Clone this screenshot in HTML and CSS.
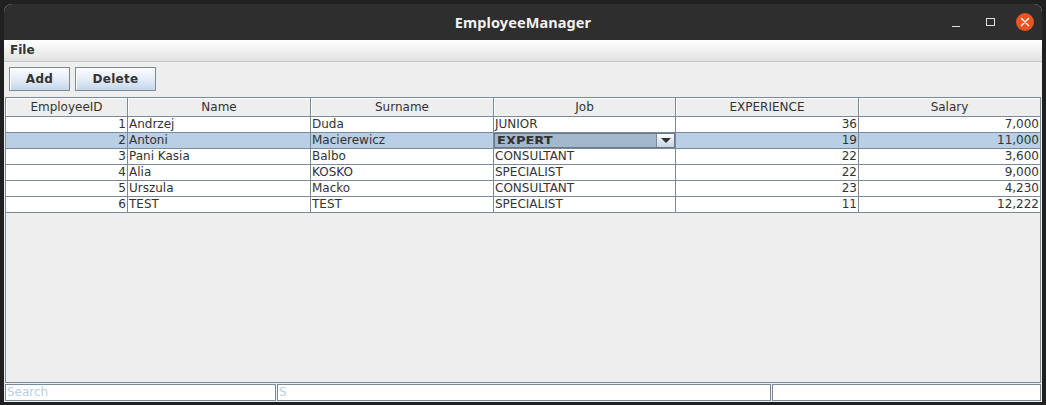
FILE: index.html
```html
<!DOCTYPE html>
<html>
<head>
<meta charset="utf-8">
<link rel="stylesheet" href="styles.css">
</head>
<body>
<div class="window">
  <div class="titlebar">
    <div></div>
    <div class="title">EmployeeManager</div>
    <div class="controls">
      <span class="ctl-min"></span>
      <span class="ctl-max"></span>
      <svg class="ctl-close" width="18" height="18" viewBox="0 0 18 18">
        <circle cx="9" cy="9" r="9" fill="#e95420"/>
        <path d="M5.5 5.5 L12.5 12.5 M12.5 5.5 L5.5 12.5" stroke="#ffffff" stroke-width="1.4" stroke-linecap="round"/>
      </svg>
    </div>
  </div>
  <div class="menubar"><span class="menu">File</span></div>
  <div class="toolbar">
    <button class="btn btn-add">Add</button>
    <button class="btn btn-del">Delete</button>
  </div>
  <div class="pane">
    <div class="row head">
      <div class="hc">EmployeeID</div>
      <div class="hc">Name</div>
      <div class="hc">Surname</div>
      <div class="hc">Job</div>
      <div class="hc">EXPERIENCE</div>
      <div class="hc">Salary</div>
    </div>
    <div class="row">
      <div class="c num">1</div><div class="c">Andrzej</div><div class="c">Duda</div><div class="c">JUNIOR</div><div class="c num">36</div><div class="c num">7,000</div>
    </div>
    <div class="row sel">
      <div class="c num">2</div><div class="c">Antoni</div><div class="c">Macierewicz</div>
      <div class="c editor">
        <div class="combo">
          <div class="combo-text"><span class="combo-clip">EXPERT</span></div>
          <div class="combo-btn"><span class="arrow"></span></div>
        </div>
      </div>
      <div class="c num">19</div><div class="c num">11,000</div>
    </div>
    <div class="row">
      <div class="c num">3</div><div class="c">Pani Kasia</div><div class="c">Balbo</div><div class="c">CONSULTANT</div><div class="c num">22</div><div class="c num">3,600</div>
    </div>
    <div class="row">
      <div class="c num">4</div><div class="c">Alia</div><div class="c">KOSKO</div><div class="c">SPECIALIST</div><div class="c num">22</div><div class="c num">9,000</div>
    </div>
    <div class="row">
      <div class="c num">5</div><div class="c">Urszula</div><div class="c">Macko</div><div class="c">CONSULTANT</div><div class="c num">23</div><div class="c num">4,230</div>
    </div>
    <div class="row">
      <div class="c num">6</div><div class="c">TEST</div><div class="c">TEST</div><div class="c">SPECIALIST</div><div class="c num">11</div><div class="c num">12,222</div>
    </div>
  </div>
  <div class="fields">
    <div class="field f1"><span class="ph">Search</span></div>
    <div class="field f2"><span class="ph">S</span></div>
    <div class="field f3"></div>
  </div>
</div>
</body>
</html>
```
FILE: styles.css
```css
html, body {
  margin: 0;
  padding: 0;
  background: #202020;
}
body {
  width: 1046px;
  height: 405px;
  overflow: hidden;
  font-family: "DejaVu Sans", sans-serif;
  font-size: 12px;
  color: #333333;
}
.window {
  margin: 4px 0 0 4px;
  width: 1038px;
  height: 398px;
  background: #eeeeee;
  border-radius: 8px 8px 0 0;
  overflow: hidden;
}
.titlebar {
  height: 36px;
  background: #2f2e2e;
  display: grid;
  grid-template-columns: 1fr auto 1fr;
  align-items: center;
}
.title {
  color: #f2f2f2;
  font-family: "Noto Sans", "DejaVu Sans", sans-serif;
  font-weight: bold;
  font-size: 14.5px;
  letter-spacing: 0.1px;
}
.controls {
  justify-self: end;
  display: flex;
  align-items: center;
  padding-right: 8px;
}
.ctl-min {
  width: 8px;
  height: 1px;
  background: #e0e0e0;
  margin-top: 8px;
  margin-right: 26px;
}
.ctl-max {
  width: 7px;
  height: 6px;
  border: 1px solid #e0e0e0;
  margin-right: 21px;
}
.ctl-close {
  display: block;
}
.menubar {
  height: 21px;
  border-bottom: 1px solid #c6c6c6;
  background: linear-gradient(#ffffff, #f4f4f4 40%, #e0e0e0);
  display: flex;
  align-items: center;
  padding-left: 6px;
}
.menu {
  font-weight: bold;
  font-size: 12px;
  color: #333333;
  line-height: 21px;
}
.toolbar {
  height: 35px;
  box-sizing: border-box;
  padding: 5px 0 0 5px;
  display: flex;
  align-items: flex-start;
  gap: 5px;
}
.btn {
  height: 24px;
  margin: 0;
  padding: 0;
  border: 1px solid #7a8a99;
  background: linear-gradient(#fbfcfe, #e8eff7 45%, #c5d6e8);
  box-shadow: inset 1px 1px 0 #ffffff;
  font-family: "DejaVu Sans", sans-serif;
  font-weight: bold;
  font-size: 12px;
  color: #333333;
  letter-spacing: 0.3px;
}
.btn-add { width: 61px; }
.btn-del { width: 81px; }
.pane {
  margin-left: 1px;
  width: 1036px;
  height: 286px;
  box-sizing: border-box;
  border: 1px solid #7a8a99;
  background: #eeeeee;
}
.row {
  display: grid;
  grid-template-columns: 122px 183px 183px 182px 183px 1fr;
  height: 16px;
  box-sizing: border-box;
  border-bottom: 1px solid #7a8a99;
  background: #ffffff;
}
.row.head {
  height: 19px;
  background: #eeeeee;
}
.hc {
  box-sizing: border-box;
  border-right: 1px solid #7a8a99;
  box-shadow: inset 1px 1px 0 #ffffff;
  text-align: center;
  line-height: 18px;
  color: #333333;
  white-space: nowrap;
  overflow: hidden;
}
.hc:last-child { border-right: none; }
.c {
  box-sizing: border-box;
  border-right: 1px solid #7a8a99;
  padding: 0 1px;
  line-height: 15px;
  white-space: nowrap;
  overflow: hidden;
  color: #333333;
}
.c:last-child { border-right: none; }
.c.num { text-align: right; }
.row.sel { background: #b8cfe5; }
.c.editor { padding: 0; }
.combo {
  height: 15px;
  box-sizing: border-box;
  border: 1px solid #66788a;
  display: flex;
  background: #a3b8cc;
}
.combo-text {
  flex: 1;
  padding-left: 2px;
  overflow: hidden;
}
.combo-clip {
  display: block;
  height: 10px;
  overflow: hidden;
  font-size: 13px;
  line-height: 14px;
  font-weight: bold;
  color: #333333;
}
.combo-btn {
  width: 18px;
  box-sizing: border-box;
  border-left: 1px solid #7a8a99;
  background: linear-gradient(#ffffff, #dfe7f0 50%, #c8d7e6);
  display: flex;
  align-items: center;
  justify-content: center;
}
.arrow {
  width: 0;
  height: 0;
  border-left: 5px solid transparent;
  border-right: 5px solid transparent;
  border-top: 5px solid #333333;
}
.fields {
  margin: 1px 0 0 1px;
  display: flex;
  gap: 1px;
  height: 17px;
}
.field {
  box-sizing: border-box;
  height: 17px;
  border: 1px solid #7a8a99;
  background: #ffffff;
  line-height: 15px;
  padding-left: 1px;
  overflow: hidden;
}
.f1 { width: 271px; }
.f2 { width: 494px; }
.f3 { width: 269px; }
.ph {
  color: #b8cfe5;
}
```
